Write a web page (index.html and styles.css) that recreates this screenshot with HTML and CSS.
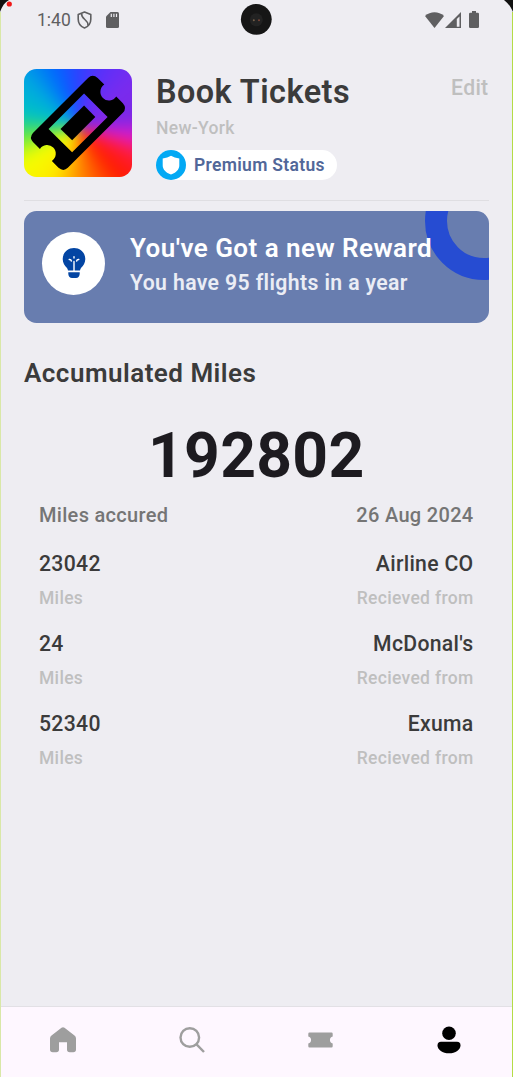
FILE: index.html
```html
<!DOCTYPE html>
<html lang="en">
<head>
<meta charset="utf-8">
<title>Book Tickets</title>
<link rel="stylesheet" href="styles.css">
</head>
<body>
<div class="phone">
  <svg class="frame" width="513" height="40" viewBox="0 0 513 40">
    <path d="M0 0H9C5 2 2 6 0 12Z" fill="#111"/>
    <path d="M513 0H504C508 3 511 7 513 12Z" fill="#111"/>
    <circle cx="9.3" cy="4" r="2.6" fill="#f01818"/>
    <circle cx="256.3" cy="19.3" r="15.4" fill="#161616"/>
    <circle cx="256.3" cy="19.8" r="6.5" fill="#222"/>
    <circle cx="253.8" cy="20.3" r="1" fill="#75604a"/>
    <circle cx="259" cy="20.3" r="1" fill="#7a4638"/>
  </svg>

  <header class="status">
    <div class="status-side">
      <span class="clock">1:40</span>
      <svg width="15" height="18" viewBox="0 0 15 18" fill="none" stroke="#5f5f61" stroke-width="1.6" stroke-linejoin="round">
        <path d="M7.500 1L13.800 3.400V8.200C13.800 12.300 11.200 15.500 7.500 16.900C3.800 15.500 1.200 12.300 1.200 8.200V3.400Z"/>
        <path d="M4.600 2.400C3.800 8.600 11.800 8.400 11 14.500"/>
      </svg>
      <svg class="sd" width="13" height="16" viewBox="0 0 13 16"><path d="M4.500 0H11.500Q13 0 13 1.500V14.500Q13 16 11.500 16H1.500Q0 16 0 14.500V4.500Z" fill="#5f5f61"/><path d="M5.300 1.800V5M7.900 1.800V5M10.500 1.800V5" stroke="#eeedf2" stroke-width="1.200"/></svg>
    </div>
    <div class="status-side status-right">
      <svg width="19" height="16" viewBox="0 0 19 16"><path d="M0 4C5.500 -1 13.500 -1 19 4L9.500 16Z" fill="#5f5f61"/></svg>
      <svg class="signal" width="16" height="16" viewBox="0 0 16 16"><path fill-rule="evenodd" d="M16 0V16H0ZM14.500 4.500L11.800 7V14.700H14.500Z" fill="#5f5f61"/></svg>
      <svg class="battery" width="10" height="17" viewBox="0 0 10 17"><path d="M3 0H7V1.700H8.700Q10 1.700 10 3V15.700Q10 17 8.700 17H1.300Q0 17 0 15.700V3Q0 1.700 1.300 1.700H3Z" fill="#5f5f61"/></svg>
    </div>
  </header>

  <main class="content">
    <section class="profile">
      <div class="logo">
        <svg width="107.500" height="107.500" viewBox="28 25 324 324"><path fill-rule="evenodd" d="M221 52Q235 39 250 52L270 72A26 26 0 1 0 306 108L326 128Q339 143 326 157L160 323Q147 336 132 323L112 302A26 26 0 1 0 76 266L55 245Q43 232 55 218ZM209 99L280 170L173 276L102 206Z"/><path d="M209 135L243 170L173 240L138 206Z"/></svg>
      </div>
      <div class="who">
        <h1 class="name">Book Tickets</h1>
        <p class="city">New-York</p>
        <div class="chip">
          <svg width="30" height="30" viewBox="0 0 30 30"><circle cx="15" cy="15" r="15" fill="#03a9f4"/><path d="M15 5.700Q18.500 8 23.300 8.500V15.500C23.300 19.500 20 22.800 15 24.500C10 22.800 6.700 19.500 6.700 15.500V8.500Q11.500 8 15 5.700Z" fill="#fff"/></svg>
          <span class="chip-text">Premium Status</span>
        </div>
      </div>
      <span class="edit">Edit</span>
    </section>

    <section class="reward">
      <div class="ring"></div>
      <div class="bulb">
        <svg width="24" height="32" viewBox="0 0 24 32"><path d="M12 1C5.500 1 .7 5.800 .7 12C.7 16 2.800 18.800 5 21Q5.800 22 6 23.600H18Q18.200 22 19 21C21.200 18.800 23.300 16 23.300 12C23.300 5.800 18.500 1 12 1Z" fill="#0345a3"/><path d="M6.300 25.300H17.700V27Q17.200 31 14 31H10Q6.800 31 6.300 27Z" fill="#0345a3"/><path d="M12 14.500V24M12 9.600V11M7.200 12.500Q9 12.300 9.400 14M16.800 12.500Q15 12.300 14.600 14" stroke="#fff" stroke-width="1.400" fill="none" stroke-linecap="round"/></svg>
      </div>
      <div class="reward-text">
        <h2 class="reward-title">You've Got a new Reward</h2>
        <p class="reward-sub">You have 95 flights in a year</p>
      </div>
    </section>

    <h2 class="section-title">Accumulated Miles</h2>
    <p class="total">192802</p>

    <section class="miles">
      <div class="row caption"><span>Miles accured</span><span>26 Aug 2024</span></div>
      <div class="entry">
        <div class="row value"><span>23042</span><span>Airline CO</span></div>
        <div class="row label"><span>Miles</span><span>Recieved from</span></div>
      </div>
      <div class="entry">
        <div class="row value"><span>24</span><span>McDonal's</span></div>
        <div class="row label"><span>Miles</span><span>Recieved from</span></div>
      </div>
      <div class="entry">
        <div class="row value"><span>52340</span><span>Exuma</span></div>
        <div class="row label"><span>Miles</span><span>Recieved from</span></div>
      </div>
    </section>
  </main>

  <nav class="tabs">
    <a class="tab"><svg width="26" height="26" viewBox="0 0 26 26"><path d="M11.500 .7Q13 -.3 14.500 .7L24.500 8.500Q26 9.700 26 11.500V22.500Q26 25.300 23.200 25.300H19.800Q17 25.300 17 22.500V15.300H9V22.500Q9 25.300 6.200 25.300H2.800Q0 25.300 0 22.500V11.500Q0 9.700 1.500 8.500Z" fill="#9e9e9e"/></svg></a>
    <a class="tab"><svg width="26" height="26" viewBox="0 0 26 26" fill="none" stroke="#9e9e9e" stroke-width="2.400"><circle cx="10.800" cy="10.500" r="9.300"/><path d="M17.300 17.200L25 25"/></svg></a>
    <a class="tab"><svg width="25" height="16" viewBox="0 0 25 16"><path d="M1.500 .5H23.500Q24.700 .5 24.700 1.700V4.500A3.600 3.600 0 0 0 24.700 11.500V14.300Q24.700 15.500 23.500 15.500H1.500Q.3 15.500 .3 14.300V11.500A3.600 3.600 0 0 0 .3 4.500V1.700Q.3 .5 1.500 .5Z" fill="#9e9e9e"/></svg></a>
    <a class="tab"><svg width="24" height="28" viewBox="0 0 24 28"><circle cx="12" cy="7.300" r="6.800"/><path d="M4 15.800H20Q23.500 15.800 23.500 19.500C23.500 23.500 18.500 27.300 12 27.300S.5 23.500 .5 19.500Q.5 15.800 4 15.800Z"/></svg></a>
  </nav>
</div>
</body>
</html>
```
FILE: styles.css
```css
* { box-sizing: border-box; margin: 0; padding: 0; }
body { background: #eeedf2; font-family: Roboto, "Noto Sans", sans-serif; letter-spacing: .31px; }
svg { display: block; flex: none; }
.phone {
  position: relative;
  width: 513px;
  height: 1077px;
  display: flex;
  flex-direction: column;
  overflow: hidden;
  background: #eeedf2;
}
.phone::after {
  content: "";
  position: absolute;
  inset: 12px 0 0;
  border-left: 1px solid #d9e8a8;
  border-right: 1px solid #b4dc46;
}
.frame { position: absolute; top: 0; left: 0; }
.status {
  height: 39px;
  padding: 0 34px 0 37px;
  display: flex;
  align-items: center;
  justify-content: space-between;
}
.status-side { display: flex; align-items: center; }
.clock { width: 40px; font-size: 17.500px; line-height: 20px; letter-spacing: 0; color: #5f5f61; }
.sd { margin-left: 14px; }
.signal { margin-left: 1px; }
.battery { margin-left: 8px; }
.content { flex: 1; padding: 30px 24.500px 0 24px; }
.profile {
  height: 132px;
  display: flex;
  align-items: flex-start;
  border-bottom: 1px solid #dfdee2;
}
.logo {
  position: relative;
  width: 107.500px;
  height: 107.500px;
  border-radius: 12.500px;
  overflow: hidden;
}
.logo::before {
  content: "";
  position: absolute;
  inset: -20px;
  background: conic-gradient(from 0deg at 50% 53%, #2c42ff 0deg, #5a30fa 22deg, #7a2bee 50deg, #7a28e6 80deg, #e01acb 100deg, #ff1c3c 116deg, #ff1a00 138deg, #ff9300 180deg, #ffe900 206deg, #f4ff00 238deg, #5be64a 262deg, #00c3c4 284deg, #00a9e0 312deg, #0068ff 338deg, #2c42ff 360deg);
  filter: blur(7px);
}
.logo svg { position: relative; }
.who { flex: 1; padding: 3.500px 0 0 24.500px; }
.name { font-size: 32.400px; line-height: 38px; font-weight: 600; letter-spacing: .46px; color: #3b3b3b; }
.city { margin-top: 7px; font-size: 17.500px; line-height: 20px; font-weight: 500; color: #bfbfbf; }
.chip {
  margin-top: 12.500px;
  width: 181px;
  height: 30px;
  border-radius: 15px;
  display: flex;
  align-items: center;
  background: #fff;
}
.chip-text { margin-left: 8px; font-size: 17.500px; line-height: 31px; font-weight: 600; color: #526799; }
.edit { padding-top: 7px; font-size: 21.200px; line-height: 24px; font-weight: 500; color: #bfbfbf; }
.reward {
  position: relative;
  height: 112.500px;
  margin-top: 9.500px;
  padding: 21px 18px 0;
  display: flex;
  border-radius: 12.500px;
  overflow: hidden;
  background: #687daf;
}
.ring {
  position: absolute;
  left: 400.500px;
  top: -49px;
  width: 118px;
  height: 118px;
  border: 22.500px solid #264cd2;
  border-radius: 50%;
}
.bulb {
  width: 63px;
  height: 63px;
  border-radius: 50%;
  display: flex;
  align-items: center;
  justify-content: center;
  background: #fff;
}
.reward-text { position: relative; margin-left: 25px; white-space: nowrap; }
.reward-title { font-size: 26px; line-height: 32px; font-weight: 600; letter-spacing: .46px; color: #fff; }
.reward-sub { margin-top: 5px; font-size: 21.200px; line-height: 28px; font-weight: 600; letter-spacing: .38px; color: #ebedf5; }
.section-title { margin-top: 34px; font-size: 26px; line-height: 32px; font-weight: 600; letter-spacing: .48px; color: #3b3b3b; }
.total { margin-top: 29px; font-size: 62.400px; line-height: 76px; font-weight: 700; text-align: center; color: #1d1b20; }
.miles { padding: 0 15px; }
.row { display: flex; justify-content: space-between; }
.caption { margin-top: 9px; font-size: 20px; line-height: 25px; font-weight: 500; color: #757575; }
.value { font-size: 21.200px; line-height: 25px; font-weight: 500; color: #3b3b3b; }
.label { margin-top: 11.500px; font-size: 17.500px; line-height: 20px; font-weight: 500; color: #bfbfbf; }
.entry { height: 80.200px; }
.caption + .entry { margin-top: 23px; }
.tabs { height: 71px; padding-right: 1px; display: flex; border-top: 1px solid #e2e0e5; background: #fef7ff; }
.tab { flex: 1; height: 66px; display: flex; align-items: center; justify-content: center; }
.tab:first-child svg { margin-right: 2px; }
.tab:last-child svg { margin-left: 1px; }
```
